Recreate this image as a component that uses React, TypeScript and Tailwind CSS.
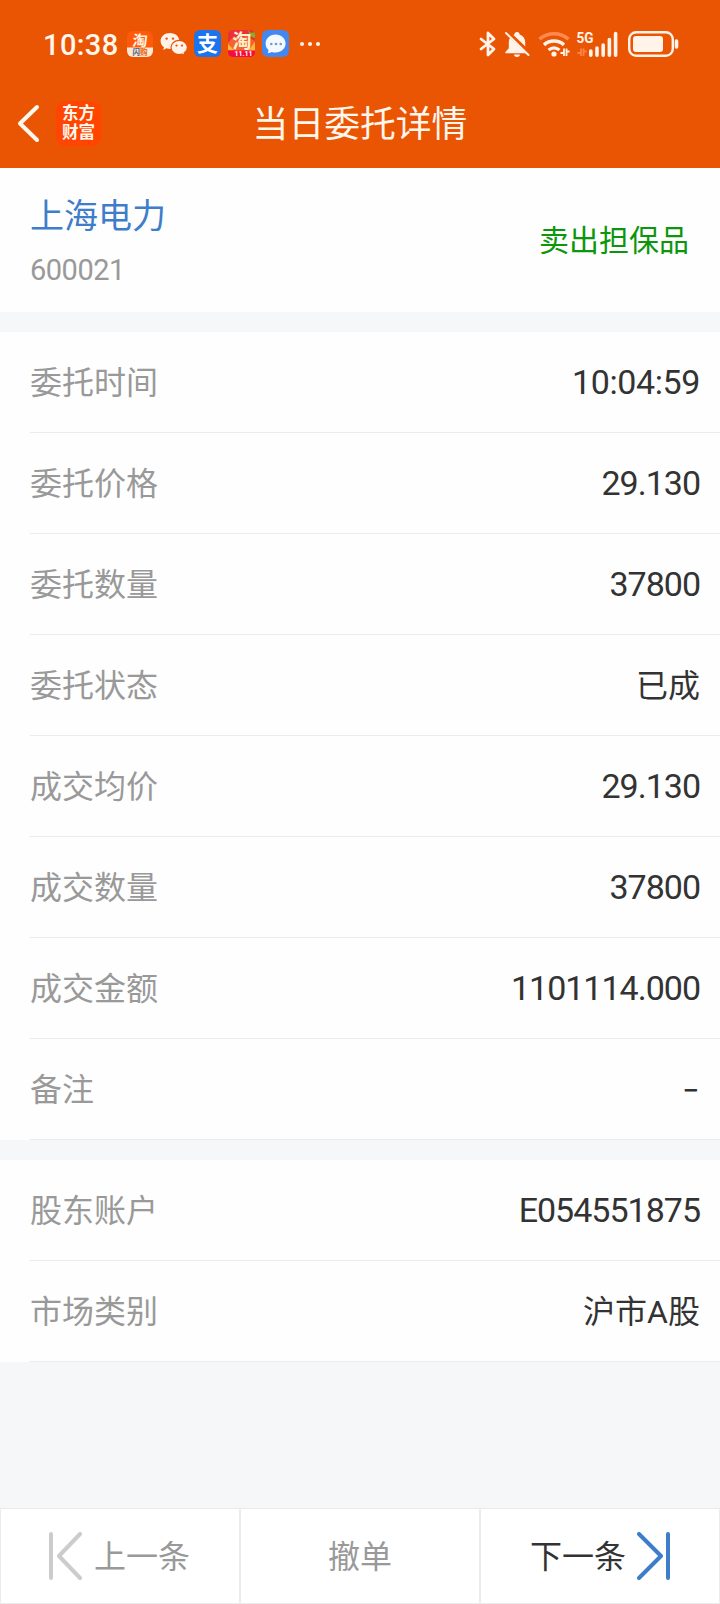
import { clsx } from "clsx";

const orderRows = [
  { label: "委托时间", value: "10:04:59" },
  { label: "委托价格", value: "29.130" },
  { label: "委托数量", value: "37800" },
  { label: "委托状态", value: "已成" },
  { label: "成交均价", value: "29.130" },
  { label: "成交数量", value: "37800" },
  { label: "成交金额", value: "1101114.000" },
  { label: "备注", value: "-" },
];

const accountRows = [
  { label: "股东账户", value: "E054551875" },
  { label: "市场类别", value: "沪市A股" },
];

const AppIcons = () => (
  <div className="ml-[9px] flex items-center gap-[7px]">
    <svg width="26" height="26" viewBox="0 0 26 26" className="mt-px overflow-visible" fontFamily="'Noto Sans CJK SC', sans-serif">
      <rect width="26" height="26" rx="6" fill="#ff5a0a" />
      <path d="M0 16.500h26V20a6 6 0 0 1-6 6H6a6 6 0 0 1-6-6z" fill="#ffe9d5" />
      <text x="5" y="14.500" fontSize="15" fontWeight="700" fill="#fff3e2" transform="skewX(-6) translate(1.500 0)">淘</text>
      <text x="5.500" y="24" fontSize="7.500" fontWeight="900" fill="#f0702a">
        <tspan fill="#59708f">闪</tspan>购
      </text>
    </svg>
    <svg width="28" height="26" viewBox="0 0 28 26" className="mt-px">
      <path
        d="M10 2C4.700 2 .6 5.500.6 10c0 2.600 1.300 4.700 3.400 6.200L3.200 19l3.400-1.700c1.100.4 2.200.6 3.400.6 5.300 0 9.400-3.500 9.400-7.900S15.300 2 10 2z"
        fill="#fff3ea"
      />
      <path
        d="M19.200 9.400c-4.600 0-8.200 3.100-8.200 7.100s3.600 7.100 8.200 7.100c1 0 2-.2 2.900-.5l2.800 1.500-.7-2.500c1.900-1.300 3.200-3.300 3.200-5.600 0-4-3.600-7.100-8.200-7.100z"
        fill="#fff3ea"
        stroke="#ea5504"
        strokeWidth="1.200"
      />
      <g fill="#ea5504">
        <circle cx="6.700" cy="7.600" r="1.200" />
        <circle cx="13" cy="7.600" r="1.200" />
        <circle cx="16.500" cy="14.600" r="1.100" />
        <circle cx="22" cy="14.600" r="1.100" />
      </g>
    </svg>
    <div className="-ml-px flex h-[27px] w-[27px] items-center justify-center rounded-[6px] bg-[#1b74ee] pb-[2px] text-[21px] leading-none font-bold text-white">
      支
    </div>
    <svg width="27" height="27" viewBox="0 0 27 27" className="overflow-visible" fontFamily="'Noto Sans CJK SC', sans-serif">
      <clipPath id="tile">
        <rect width="27" height="27" rx="5" />
      </clipPath>
      <g clipPath="url(#tile)">
        <path d="M0 0h27v27H0z" fill="#ee2f3a" />
        <path d="M0 13 6 6l5 4 7-5 5 4 4 2v14H0z" fill="#f5652a" />
        <path d="M20 0l3 3 4-1v6l-5-2z" fill="#78b62c" />
        <path d="M0 14l6 6H0zM27 12v9h-7z" fill="#fbb63e" />
        <path d="M0 20.500h27V27H0z" fill="#f30b41" />
      </g>
      <text x="4.500" y="18" fontSize="19" fontWeight="700" fill="#fff0cf">淘</text>
      <text x="6.500" y="26.200" fontSize="7" fontWeight="700" fill="#fff" fontFamily="Roboto, sans-serif">11.11</text>
    </svg>
    <svg width="27" height="27" viewBox="0 0 27 27">
      <rect width="27" height="27" rx="6" fill="#4388f0" />
      <path
        d="M13.500 4.500C7.800 4.500 3.600 8.500 3.600 13.600c0 2.600 1.100 4.900 2.900 6.500.1 1-.2 2-.9 2.800 1.700.1 3-.3 4.100-1 1.200.4 2.500.6 3.800.6 5.700 0 10.100-3.800 10.100-8.900s-4.400-9.100-10.100-9.100z"
        fill="#f3f9ff"
      />
      <g fill="#6d9bd4">
        <circle cx="9.300" cy="14" r="1.300" />
        <circle cx="14" cy="14" r="1.300" />
        <circle cx="18.700" cy="14" r="1.300" />
      </g>
    </svg>
    <svg width="22" height="6" viewBox="0 0 22 6" fill="#fff0e2" className="ml-[3px]">
      <circle cx="3" cy="3" r="2.100" />
      <circle cx="11" cy="3" r="2.100" />
      <circle cx="19" cy="3" r="2.100" />
    </svg>
  </div>
);

const SystemIcons = () => (
  <svg width="204" height="30" viewBox="0 0 204 30" fill="none" stroke="#fff3ea" className="ml-auto">
    {/* bluetooth */}
    <path
      d="M2 10l13 10-6 6V4l6 6L2 20"
      strokeWidth="2.800"
      strokeLinejoin="round"
      strokeLinecap="round"
    />
    {/* muted bell */}
    <path
      d="M38 3c-1.600 0-2.600 1-2.600 2.400-3.700 1.100-5.600 4.100-5.600 7.700v6.200L26.400 23v1.200h23V23l-3.200-3.700v-6.200c0-3.600-1.900-6.600-5.600-7.700C40.600 4 39.600 3 38 3zM35 25.500h6c0 1.500-1.300 2.500-3 2.500s-3-1-3-2.500z"
      fill="#fff3ea"
      stroke="none"
    />
    <path d="M27 2l24 23" stroke="#ea5504" strokeWidth="4.500" />
    <path d="M27 4l22.500 22" strokeWidth="2" strokeLinecap="round" />
    {/* wifi */}
    <g strokeWidth="3.600">
      <path d="M60.500 10.200c8.500-7.200 20.500-7.200 29 0" stroke="#ff8a50" />
      <path d="M65 15.800c6-5 14-5 20 0" />
      <path d="M69.500 21c3.500-2.800 7.500-2.800 11 0" strokeWidth="3.200" />
    </g>
    <circle cx="75" cy="25" r="2.600" fill="#fff3ea" stroke="none" />
    <path d="M81.500 24h3.500v-4.500V27M87.500 19.500V27v-4.500h3" strokeWidth="1.800" />
    {/* mobile signal */}
    <text
      x="97.500"
      y="14"
      fill="#fff3ea"
      stroke="none"
      fontSize="15.500"
      fontWeight="700"
      fontFamily="Roboto, sans-serif"
      textLength="17"
      lengthAdjust="spacingAndGlyphs"
    >
      5G
    </text>
    <path d="M98.500 24h3.500v-4.500V27M104.500 19.500V27v-4.500h3" stroke="#ff8147" strokeWidth="1.800" />
    <g strokeWidth="3.600" strokeLinecap="round">
      <path d="M111.800 22v4.200M118 19v7.200M124.200 16v10.200M130.400 10.500v15.700M136.600 4.500v21.700" />
    </g>
    {/* battery */}
    <rect x="150.200" y="3.200" width="43.600" height="23.600" rx="7" strokeWidth="2.400" />
    <rect x="154" y="7" width="30" height="16" rx="3" fill="#fff3ea" stroke="none" />
    <path d="M197.500 12v6" strokeWidth="3.600" strokeLinecap="round" />
  </svg>
);

const Header = () => (
  <header className="h-[168px] bg-[#ea5504] text-[#fff6ec]">
    <div className="flex h-[80px] items-center pt-[7px] pr-[37px] pl-[43px]">
      <span className="w-[75px] pt-[3px] font-[Roboto] text-[29px] leading-none font-medium tracking-[0.4px] whitespace-nowrap">
        10:38
      </span>
      <AppIcons />
      <SystemIcons />
    </div>
    <div className="flex h-[88px] items-center pb-[2px]">
      <div className="flex w-[179px] items-center pl-[15px]">
        <svg width="26" height="40" viewBox="0 0 26 40" fill="none" stroke="#fff8ef">
          <path d="M22 4L5 20.500 22 37" strokeWidth="4" strokeLinecap="round" strokeLinejoin="round" />
        </svg>
        <div className="ml-[15px] flex h-[45px] w-[45px] flex-col items-center justify-center rounded-[9px] bg-[#ff4500] pb-[3px] text-[16.5px] leading-[19px] font-bold">
          <span>东方</span>
          <span>财富</span>
        </div>
      </div>
      <h1 className="w-[362px] pb-[3px] text-center text-[35.8px] leading-none">当日委托详情</h1>
    </div>
  </header>
);

const Row = ({ label, value }: { label: string; value: string }) => (
  <div className="flex h-[101px] bg-[#fefefe] pl-[30px]">
    <div className="flex flex-1 items-center justify-between border-b border-[#ebebeb] pr-[20px] text-[32px]">
      <span className="pb-1 text-[#999]">{label}</span>
      <span
        className={clsx(
          "text-[#333]",
          value === "-"
            ? "inline-block origin-right scale-x-[1.2] font-[Inter]"
            : "font-[Roboto,'Noto_Sans_CJK_SC',sans-serif]",
          /\d/.test(value) ? "text-[34px]" : value !== "-" && "pt-px",
          value.includes(":") ? "tracking-[-0.4px]" : /\d/.test(value) && "tracking-[-1px]"
        )}
      >
        {value}
      </span>
    </div>
  </div>
);

const Footer = () => (
  <footer className="flex h-[96px] bg-white text-[32px] text-[#999]">
    <button className="flex w-[240px] items-center border border-[#ebebeb] pl-[47px]">
      <svg width="34" height="48" viewBox="0 0 34 48" fill="none" stroke="#ccc" strokeWidth="4" strokeLinecap="round" strokeLinejoin="round">
        <path d="M3 2v44M32 2L11 24l21 22" />
      </svg>
      <span className="ml-[12px] pb-1">上一条</span>
    </button>
    <button className="w-[240px] border border-[#ebebeb] pb-1">撤单</button>
    <button className="flex w-[240px] items-center border border-[#ebebeb] pl-[49px]">
      <span className="pb-1 text-[#333]">下一条</span>
      <svg width="34" height="48" viewBox="0 0 34 48" fill="none" stroke="#3d7dca" strokeWidth="4" strokeLinecap="round" strokeLinejoin="round" className="ml-[11px]">
        <path d="M2 2l22 22L2 46M31 2v44" />
      </svg>
    </button>
  </footer>
);

const App = () => {
  return (
    <div className="flex h-[1604px] w-[720px] flex-col bg-[#f6f7f9] font-['Noto_Sans_CJK_SC',sans-serif]">
      <Header />
      <section className="flex h-[144px] items-center justify-between bg-[#fefefe] pr-[31px] pl-[30px]">
        <div className="pt-[4px]">
          <h2 className="text-[34px] leading-[52px] text-[#3d7dca]">上海电力</h2>
          <p className="pt-[4px] font-[Roboto] text-[29px] leading-[52px] tracking-[-0.5px] text-[#999]">600021</p>
        </div>
        <span className="pb-[4px] text-[30px] text-[#0b960b]">卖出担保品</span>
      </section>
      <section className="mt-5">
        {orderRows.map((row) => (
          <Row key={row.label} {...row} />
        ))}
      </section>
      <section className="mt-5">
        {accountRows.map((row) => (
          <Row key={row.label} {...row} />
        ))}
      </section>
      <div className="flex-1" />
      <Footer />
    </div>
  );
};

export default App;
